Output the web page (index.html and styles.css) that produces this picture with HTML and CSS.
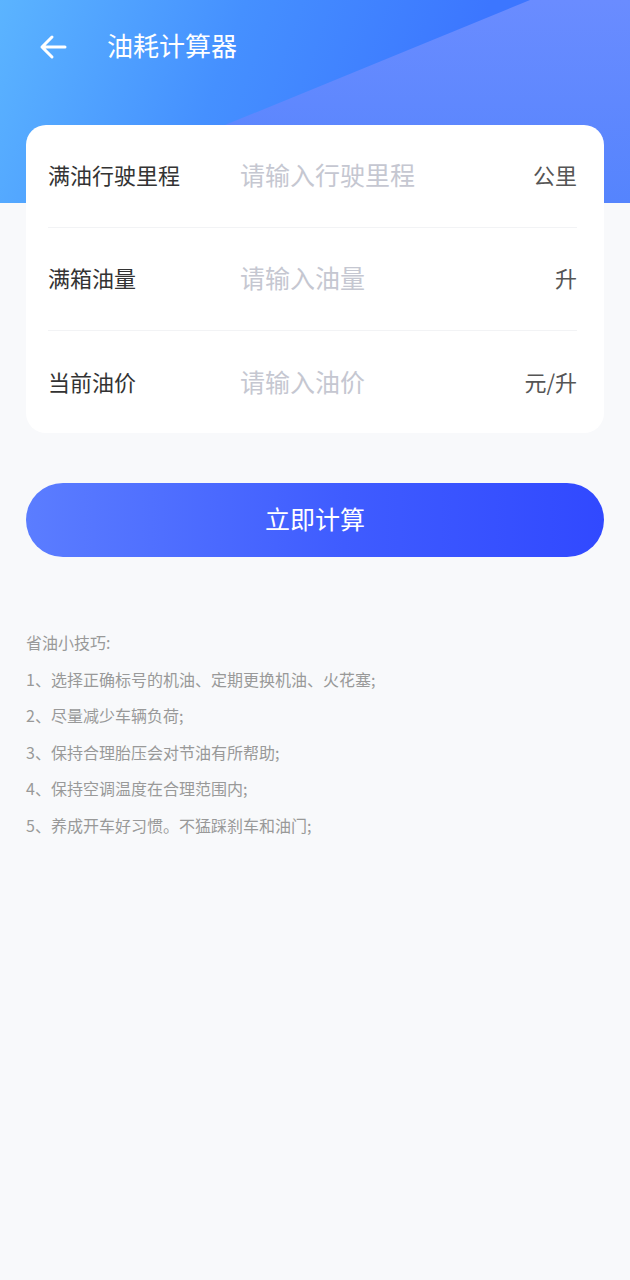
FILE: index.html
```html
<!DOCTYPE html>
<html lang="zh-CN">
  <head>
    <meta charset="UTF-8" />
    <meta name="viewport" content="width=device-width, initial-scale=1.0" />
    <title>油耗计算器</title>
    <link rel="stylesheet" href="styles.css">
  </head>
  <body>
    <div class="header">
      <div class="nav">
        <a class="back" href="#">
          <svg width="28" height="26" viewBox="0 0 28 26">
            <path d="M26 13H3M13 3L3 13l10 10" fill="none" stroke="#fff" stroke-width="3" stroke-linecap="round" stroke-linejoin="round" />
          </svg>
        </a>
        <h1 class="title">油耗计算器</h1>
      </div>
    </div>

    <div class="card">
      <div class="row">
        <span class="label">满油行驶里程</span>
        <input class="field" type="number" placeholder="请输入行驶里程" />
        <span class="unit">公里</span>
      </div>
      <div class="row">
        <span class="label">满箱油量</span>
        <input class="field" type="number" placeholder="请输入油量" />
        <span class="unit">升</span>
      </div>
      <div class="row">
        <span class="label">当前油价</span>
        <input class="field" type="number" placeholder="请输入油价" />
        <span class="unit">元/升</span>
      </div>
    </div>

    <button class="calc-btn">立即计算</button>

    <div class="tips">
      <p>省油小技巧:</p>
      <p>1、选择正确标号的机油、定期更换机油、火花塞;</p>
      <p>2、尽量减少车辆负荷;</p>
      <p>3、保持合理胎压会对节油有所帮助;</p>
      <p>4、保持空调温度在合理范围内;</p>
      <p>5、养成开车好习惯。不猛踩刹车和油门;</p>
    </div>
  </body>
</html>
```

FILE: styles.css
```css
body {
  margin: 0;
  background-color: #f8f9fb;
  font-family: "Noto Sans CJK SC", "Noto Sans", sans-serif;
  min-height: 1280px;
}

.header {
  position: relative;
  height: 203px;
  background: linear-gradient(110deg, #5bb4ff 0%, #4590ff 35%, #3c76ff 70%);
  overflow: hidden;
}

.header::before {
  content: "";
  position: absolute;
  inset: 0;
  background: linear-gradient(180deg, #6a8cff 0%, #5584fd 100%);
  clip-path: polygon(530px 0, 100% 0, 100% 100%, 35px 100%);
}

.nav {
  position: relative;
  display: flex;
  align-items: center;
  height: 88px;
  padding: 0 0 0 39px;
  margin-bottom: 6px;
}

.back {
  display: flex;
  width: 28px;
  height: 26px;
  margin-top: 6px;
}

.title {
  margin: 0 0 0 40px;
  color: #fff;
  font-size: 26px;
  font-weight: 400;
}

.card {
  position: relative;
  margin: -78px 26px 0;
  padding: 0 27px 0 22px;
  background: #fff;
  border-radius: 20px;
}

.row {
  display: flex;
  align-items: center;
  height: 98px;
  padding-bottom: 4px;
  border-bottom: 1px solid #f2f3f5;
}

.row:last-child {
  height: 97px;
  padding-top: 1px;
  border-bottom: none;
}

.label {
  width: 192px;
  flex-shrink: 0;
  color: #333;
  font-size: 22px;
}

.field {
  flex: 1;
  min-width: 0;
  border: none;
  outline: none;
  background: transparent;
  padding: 0;
  font-family: inherit;
  font-size: 25px;
  color: #333;
}

.field::placeholder {
  color: #c5c7d1;
}

.unit {
  color: #555;
  font-size: 22px;
}

.calc-btn {
  display: block;
  width: 578px;
  height: 74px;
  margin: 50px 26px 0;
  padding: 0 0 4px;
  border: none;
  border-radius: 37px;
  background: linear-gradient(90deg, #5b7dff 0%, #3f5cff 55%, #3149ff 100%);
  color: #fff;
  font-family: inherit;
  font-size: 25px;
  cursor: pointer;
}

.tips {
  margin: 67px 26px 0;
  color: #999;
  font-size: 16px;
}

.tips p {
  margin: 0;
  line-height: 36.6px;
}
```
